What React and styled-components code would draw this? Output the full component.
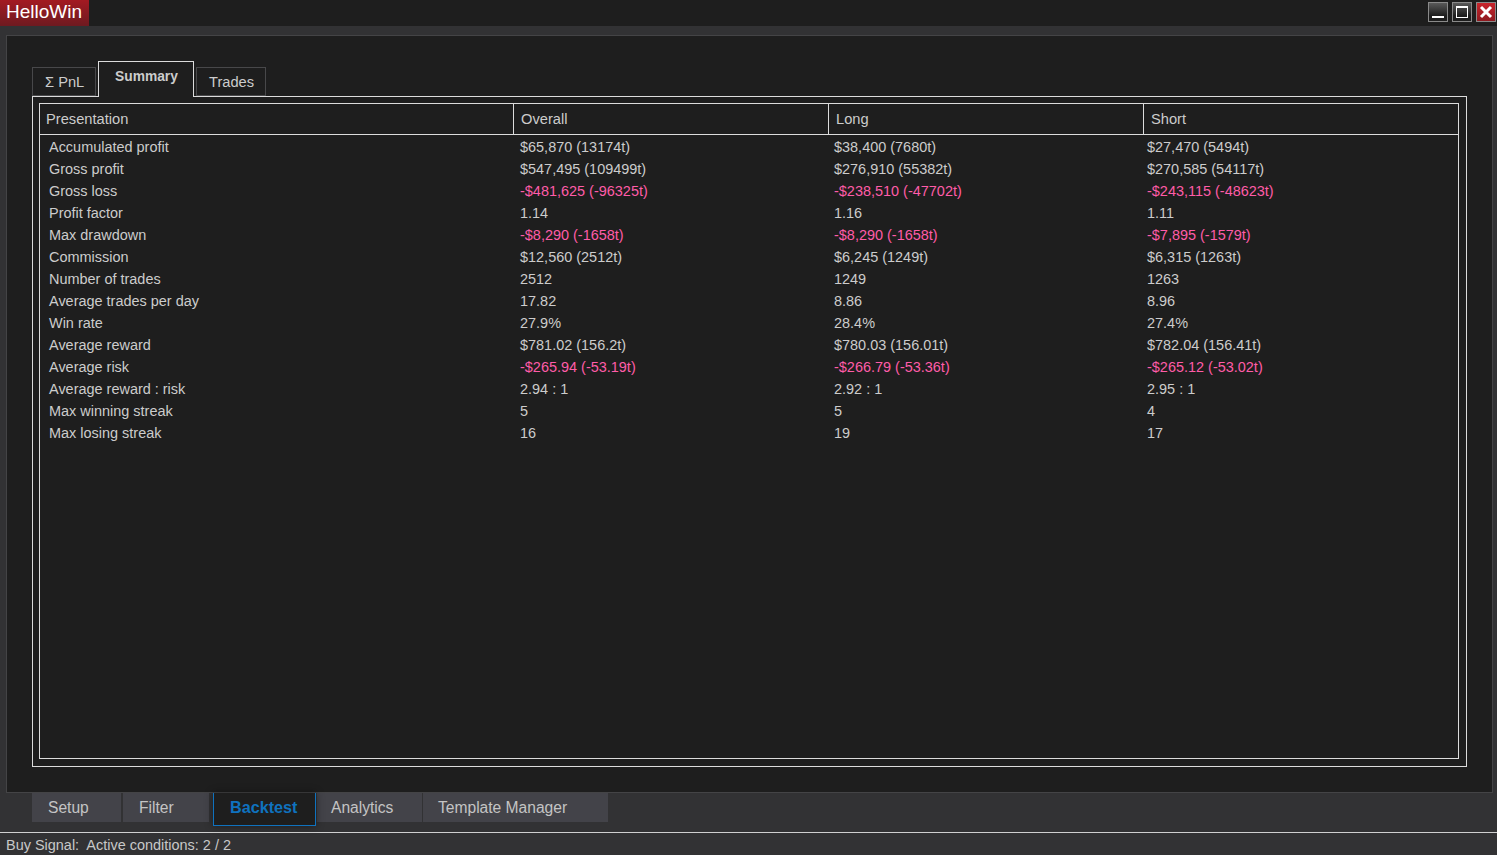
import React from 'react'
import styled, { createGlobalStyle } from 'styled-components'

const GlobalStyle = createGlobalStyle`
  html, body {
    margin: 0;
    padding: 0;
    height: 100%;
    background: #323234;
    overflow: hidden;
  }
  * {
    box-sizing: border-box;
  }
`

const Window = styled.div`
  width: 1497px;
  height: 855px;
  display: flex;
  flex-direction: column;
  background: #323234;
  color: #cccccc;
  font-family: 'Liberation Sans', Arial, sans-serif;
  font-size: 14.67px;
  overflow: hidden;
`

const TitleBar = styled.div`
  height: 26px;
  flex: none;
  display: flex;
  justify-content: space-between;
  background: #1e1e1e;
`

const Logo = styled.div`
  width: 89px;
  height: 26px;
  padding-left: 6px;
  line-height: 23px;
  font-size: 19px;
  color: #fff;
  background: linear-gradient(#a31a22, #6e1a20);
`

const WindowButtons = styled.div`
  display: flex;
  gap: 4px;
  padding: 2px 1px 0 0;
`

const WindowButton = styled.div`
  width: 20px;
  height: 20px;
  display: flex;
  align-items: center;
  justify-content: center;
  border: 1px solid #8a8a8a;
  background: ${(p) =>
    p.$close
      ? 'linear-gradient(#c9252c, #8e1a20)'
      : 'linear-gradient(#5a5a5a, #1e1e1e 70%)'};
`

const Panel = styled.div`
  margin: 9px 4px 0 6px;
  height: 758px;
  flex: none;
  padding: 25px 25px 0 25px;
  background: #1e1e1e;
  border: 1px solid #444446;
`

const TabRow = styled.div`
  height: 35px;
  display: flex;
  align-items: flex-end;
  position: relative;
  z-index: 1;
`

const SubTab = styled.div`
  width: ${(p) => p.$width}px;
  height: ${(p) => (p.$active ? '36px' : '29px')};
  margin-right: 2px;
  margin-bottom: ${(p) => (p.$active ? '-1px' : '0')};
  padding: ${(p) => (p.$active ? '7px 0 0 16px' : '6px 0 0 12px')};
  background: #1e1e1e;
  border: 1px solid ${(p) => (p.$active ? '#dcdcdc' : '#48484a')};
  border-bottom: ${(p) => (p.$active ? 'none' : '1px solid #48484a')};
  font-weight: ${(p) => (p.$active ? 700 : 400)};
  font-size: ${(p) => (p.$active ? '13.8px' : '14.67px')};
  color: #cccccc;
  white-space: nowrap;
`

const TabBody = styled.div`
  height: 671px;
  padding: 6px 7px 7px 6px;
  border: 1px solid #dcdcdc;
`

const Table = styled.div`
  height: 100%;
  border: 1px solid #dcdcdc;
`

const HeaderRow = styled.div`
  height: 31px;
  display: grid;
  grid-template-columns: 473px 315px 315px 1fr;
  border-bottom: 1px solid #dcdcdc;
`

const HeaderCell = styled.div`
  padding-left: ${(p) => (p.$first ? '6px' : '7px')};
  line-height: 31px;
  border-left: ${(p) => (p.$first ? 'none' : '1px solid #dcdcdc')};
`

const Rows = styled.div`
  padding-top: 1px;
`

const Row = styled.div`
  height: 22px;
  display: grid;
  grid-template-columns: 471px 314px 313px 1fr;
  padding-left: 9px;
  font-size: 14.46px;
  line-height: 22px;
`

const Cell = styled.div`
  color: ${(p) => (p.$negative ? '#ff5ca8' : '#cccccc')};
  white-space: nowrap;
`

const BottomTabs = styled.div`
  height: 40px;
  flex: none;
  display: flex;
  padding-left: 32px;
  border-bottom: 1px solid #d0d0d0;
`

const BottomTab = styled.div`
  position: relative;
  z-index: ${(p) => (p.$active ? 1 : 0)};
  height: ${(p) => (p.$active ? '33px' : '29px')};
  width: ${(p) => p.$width}px;
  margin-right: ${(p) => p.$gap}px;
  padding-left: ${(p) => p.$pad}px;
  font-size: ${(p) => (p.$active ? '16.2px' : '15.6px')};
  line-height: 29px;
  font-weight: ${(p) => (p.$active ? 700 : 400)};
  color: ${(p) => (p.$active ? '#0f72bf' : '#c4c4c4')};
  background: ${(p) => (p.$active ? '#1e1e1e' : '#434349')};
  border: ${(p) => (p.$active ? '1px solid #0f72bf' : 'none')};
  border-top: none;
  box-shadow: ${(p) => (p.$active ? '0 0 8px rgba(0, 0, 0, 0.45)' : 'none')};
  white-space: nowrap;
`

const StatusBar = styled.div`
  height: 22px;
  flex: none;
  padding: 2px 0 0 6px;
  white-space: pre;
  color: #c8c8c8;
  font-size: 14.46px;
  line-height: 20px;
`

const columns = ['Overall', 'Long', 'Short']

const rows = [
  ['Accumulated profit', '$65,870 (13174t)', '$38,400 (7680t)', '$27,470 (5494t)'],
  ['Gross profit', '$547,495 (109499t)', '$276,910 (55382t)', '$270,585 (54117t)'],
  ['Gross loss', '-$481,625 (-96325t)', '-$238,510 (-47702t)', '-$243,115 (-48623t)'],
  ['Profit factor', '1.14', '1.16', '1.11'],
  ['Max drawdown', '-$8,290 (-1658t)', '-$8,290 (-1658t)', '-$7,895 (-1579t)'],
  ['Commission', '$12,560 (2512t)', '$6,245 (1249t)', '$6,315 (1263t)'],
  ['Number of trades', '2512', '1249', '1263'],
  ['Average trades per day', '17.82', '8.86', '8.96'],
  ['Win rate', '27.9%', '28.4%', '27.4%'],
  ['Average reward', '$781.02 (156.2t)', '$780.03 (156.01t)', '$782.04 (156.41t)'],
  ['Average risk', '-$265.94 (-53.19t)', '-$266.79 (-53.36t)', '-$265.12 (-53.02t)'],
  ['Average reward : risk', '2.94 : 1', '2.92 : 1', '2.95 : 1'],
  ['Max winning streak', '5', '5', '4'],
  ['Max losing streak', '16', '19', '17'],
]

const bottomTabs = [
  { label: 'Setup', width: 89, gap: 2, pad: 16 },
  { label: 'Filter', width: 86, gap: 4, pad: 16 },
  { label: 'Backtest', width: 103, gap: 1, pad: 16, active: true },
  { label: 'Analytics', width: 105, gap: 1, pad: 14 },
  { label: 'Template Manager', width: 185, gap: 0, pad: 15 },
]

export default function App() {
  return (
    <Window>
      <GlobalStyle />
      <TitleBar>
        <Logo>HelloWin</Logo>
        <WindowButtons>
          <WindowButton>
            <svg width="14" height="14" viewBox="0 0 14 14">
              <rect x="1" y="11" width="12" height="2" fill="#fff" />
            </svg>
          </WindowButton>
          <WindowButton>
            <svg width="14" height="14" viewBox="0 0 14 14" fill="none">
              <rect x="1.5" y="1.5" width="11" height="11" stroke="#fff" />
              <rect x="1" y="1" width="12" height="2" fill="#fff" />
            </svg>
          </WindowButton>
          <WindowButton $close>
            <svg width="14" height="14" viewBox="0 0 14 14">
              <path d="M2 2 L12 12 M12 2 L2 12" stroke="#fff" strokeWidth="3" />
            </svg>
          </WindowButton>
        </WindowButtons>
      </TitleBar>
      <Panel>
        <TabRow>
          <SubTab $width={64}>Σ PnL</SubTab>
          <SubTab $width={96} $active>Summary</SubTab>
          <SubTab $width={70}>Trades</SubTab>
        </TabRow>
        <TabBody>
          <Table>
            <HeaderRow>
              <HeaderCell $first>Presentation</HeaderCell>
              {columns.map((c) => (
                <HeaderCell key={c}>{c}</HeaderCell>
              ))}
            </HeaderRow>
            <Rows>
              {rows.map((r) => (
                <Row key={r[0]}>
                  {r.map((v, i) => (
                    <Cell key={i} $negative={v.startsWith('-')}>
                      {v}
                    </Cell>
                  ))}
                </Row>
              ))}
            </Rows>
          </Table>
        </TabBody>
      </Panel>
      <BottomTabs>
        {bottomTabs.map((t) => (
          <BottomTab key={t.label} $width={t.width} $gap={t.gap} $pad={t.pad} $active={t.active}>
            {t.label}
          </BottomTab>
        ))}
      </BottomTabs>
      <StatusBar>Buy Signal:  Active conditions: 2 / 2</StatusBar>
    </Window>
  )
}
